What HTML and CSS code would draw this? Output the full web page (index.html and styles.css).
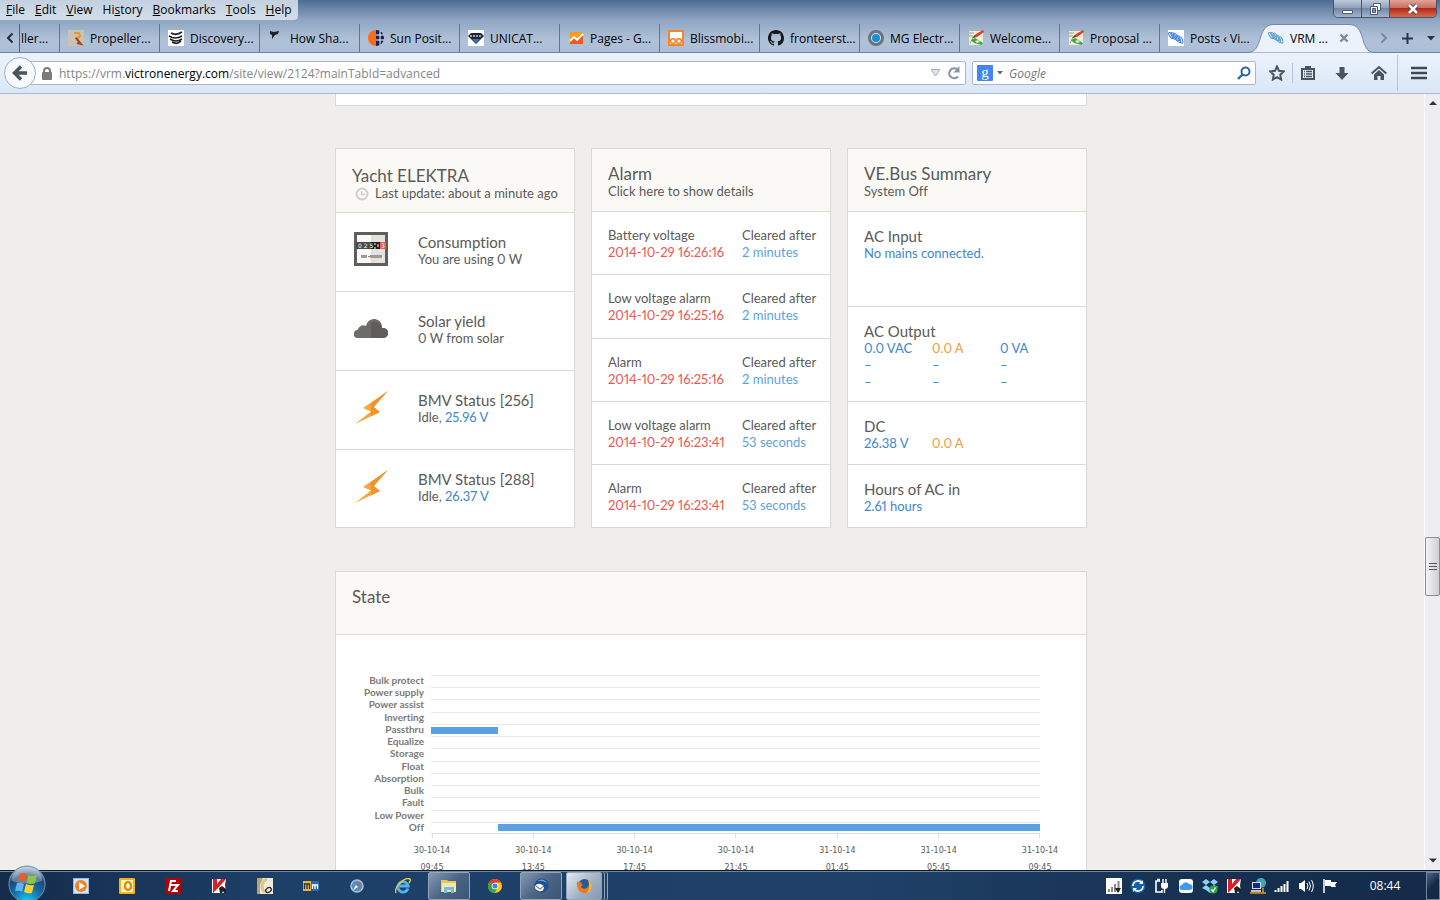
FILE: index.html
```html
<!DOCTYPE html>
<html lang="en">
<head>
    <meta charset="UTF-8">
    <meta name="viewport" content="width=device-width, initial-scale=1.0">
    <title>VRM Portal</title>
    <link rel="stylesheet" href="styles.css">
</head>
<body>

    <!-- Shared icons -->
    <svg class="defs" aria-hidden="true">
        <symbol id="bolt" viewBox="0 0 34 34">
            <path d="M34 1 9 18l8 3.500L1 34l25-12-8-4z" fill="#f7a63c"/>
            <path d="M34 1 17 13v13.300L26 22l-6-5z" fill="#f0932b"/>
        </symbol>
        <symbol id="wave" viewBox="0 0 16 16">
            <g fill="none" stroke="currentColor">
                <ellipse cx="3" cy="5.500" rx="1.500" ry="3.500" transform="rotate(-35 3 5.500)"/>
                <ellipse cx="5.500" cy="6" rx="1.500" ry="4" transform="rotate(-35 5.500 6)"/>
                <ellipse cx="8" cy="7" rx="1.500" ry="4.500" transform="rotate(-30 8 7)"/>
                <ellipse cx="10.500" cy="9" rx="1.500" ry="4" transform="rotate(-25 10.500 9)"/>
                <ellipse cx="13" cy="10" rx="1.500" ry="3.500" transform="rotate(-20 13 10)"/>
            </g>
        </symbol>
        <symbol id="pencils" viewBox="0 0 16 16">
            <path d="M1 1h14v14H1z" fill="#f1ecd6"/>
            <path d="M1 3h5M1 6h4M2 13l3-5" stroke="#9aa77a"/>
            <path d="M15 0 8 4 4 8l5-1 7-5z" fill="#d2452c"/>
            <path d="m3 10 4-2 8 5-1 2-8-2z" fill="#3fa648"/>
            <path d="M7 11l3-1 2 2-3 1z" fill="#d9efd2"/>
            <path d="M4 8 7 5l1 2z" fill="#6b4a2a"/>
        </symbol>
        <symbol id="kaspersky" viewBox="0 0 16 16">
            <path d="M1 1h14l-1 6 1 8H1z" fill="#fff"/>
            <path d="M2 1h4v5l4-5h5L8 9l-6 6z" fill="#d8202a"/>
            <path d="M8 10l3-2 4 3v4h-2l-1-2-1 2H9z" fill="#222"/>
        </symbol>
    </svg>

    <!-- Window title bar -->
    <header class="titlebar">
        <nav class="menu">
            <button><u>F</u>ile</button>
            <button><u>E</u>dit</button>
            <button><u>V</u>iew</button>
            <button>Hi<u>s</u>tory</button>
            <button><u>B</u>ookmarks</button>
            <button><u>T</u>ools</button>
            <button><u>H</u>elp</button>
        </nav>
        <div class="window-buttons">
            <button aria-label="Minimize"><svg width="13" height="14"><path d="M1.500 8.500h10v3h-10z" fill="#fff" stroke="#4d5b70"/></svg></button>
            <button aria-label="Restore"><svg width="13" height="14"><path d="M4.500 1.500h7v7h-7z" fill="#fff" stroke="#4d5b70"/><path d="M1.500 4.500h7v8h-7z" fill="#fff" stroke="#4d5b70"/><path d="M3.500 6.500h3v4h-3z" fill="#8393a9" stroke="#4d5b70"/></svg></button>
            <button class="close" aria-label="Close"><svg width="14" height="14"><path d="m3 3 8 8m0-8-8 8" stroke="#5b3f4a" stroke-width="4.500"/><path d="m3 3 8 8m0-8-8 8" stroke="#fff" stroke-width="2.500"/></svg></button>
        </div>
    </header>

    <!-- Tabs -->
    <div class="tabs">
        <button class="scroll-left" aria-label="Scroll tabs left"><svg width="8" height="12"><path d="M6.500 1.500 2 6l4.500 4.500" fill="none" stroke="#222b36" stroke-width="2"/></svg></button>
        <button class="tab tab-cut">ller...</button>
        <button class="tab">
            <svg viewBox="0 0 16 16"><path d="M0 0h16v16H0z" fill="#c9c2b6"/><path d="M6 3h5l1 3-2 2H7" fill="none" stroke="#e9962a" stroke-width="2"/><path d="m8 8 5 6-4-1" fill="none" stroke="#a8481a" stroke-width="2"/></svg>
            Propeller...
        </button>
        <button class="tab">
            <svg viewBox="0 0 16 16"><path d="M0 0h16v16H0z" fill="#fff"/><path d="M3 3q5 3 11-1M1 6q6 4 13 0M2 9q6 4 12 0M4 12q5 3 9-1" fill="none" stroke="#1d1f22" stroke-width="1.700"/></svg>
            Discovery...
        </button>
        <button class="tab">
            <svg viewBox="0 0 16 16"><path d="m2 1 4 1 5-1-1 3-3 1-3 4 0-4-2-1z" fill="#222"/></svg>
            How Sha...
        </button>
        <button class="tab">
            <svg viewBox="0 0 16 16"><path d="M8 0a8 8 0 0 0 0 16z" fill="#ff6a13"/><path d="M8 0a8 8 0 0 1 0 16z" fill="#14235a"/><path d="M8 5h8M8 10h8M12 1v14" stroke="#fff"/></svg>
            Sun Posit...
        </button>
        <button class="tab">
            <svg viewBox="0 0 16 16"><path d="M0 0h16v16H0z" fill="#fff"/><path d="M3 3h10l3 3-8 8-8-8z" fill="#23272c"/><path d="M4 9h8l-4 4z" fill="#2b7cc0"/><path d="M2 6h12" stroke="#ccd" stroke-width="1.500" stroke-dasharray="2 1"/></svg>
            UNICAT...
        </button>
        <button class="tab">
            <svg viewBox="0 0 16 16"><rect x="2" y="2" width="13" height="12" rx="1" fill="#f99b1c"/><path d="m2 11 4-4 3 3 6-6v10H2z" fill="#f05a22"/><path d="m2 11 4-4 3 3 6-6" fill="none" stroke="#fff" stroke-width="1.800"/></svg>
            Pages - G...
        </button>
        <button class="tab">
            <svg viewBox="0 0 16 16"><path d="M0 0h16v16H0z" fill="#f5842a"/><path d="M2 2h12v6H2z" fill="#fff"/><path d="M2 8h12v6H2z" fill="#fbe3cf"/><circle cx="5" cy="11" r="2.300" fill="#fff" stroke="#f5842a" stroke-width="1.500"/><circle cx="11" cy="11" r="2.300" fill="#fff" stroke="#f5842a" stroke-width="1.500"/></svg>
            Blissmobi...
        </button>
        <button class="tab">
            <svg viewBox="0 0 16 16"><path fill="#191717" d="M8 0C3.580 0 0 3.580 0 8c0 3.540 2.290 6.530 5.470 7.590.4.070.55-.17.55-.38v-1.490c-2.010.37-2.530-.49-2.690-.94-.09-.23-.48-.94-.82-1.130-.28-.15-.68-.52-.01-.53.63-.01 1.080.58 1.230.82.72 1.210 1.870.87 2.330.66.070-.52.28-.87.51-1.070-1.780-.2-3.640-.89-3.640-3.950 0-.87.31-1.590.82-2.150-.08-.2-.36-1.020.08-2.120 0 0 .67-.21 2.200.82a7.700 7.700 0 0 1 4 0c1.530-1.040 2.200-.82 2.200-.82.44 1.100.16 1.920.08 2.120.51.56.82 1.270.82 2.150 0 3.070-1.870 3.750-3.650 3.950.29.25.54.73.54 1.480v2.200c0 .21.15.46.55.38A8 8 0 0 0 16 8c0-4.420-3.580-8-8-8z"/></svg>
            fronteerst...
        </button>
        <button class="tab">
            <svg viewBox="0 0 16 16"><circle cx="8" cy="8" r="6.500" fill="#cfe4f2" stroke="#6d737b" stroke-width="3"/><circle cx="8" cy="8" r="4" fill="#1b8fd2"/></svg>
            MG Electr...
        </button>
        <button class="tab"><svg><use href="#pencils"/></svg>Welcome...</button>
        <button class="tab"><svg><use href="#pencils"/></svg>Proposal ...</button>
        <button class="tab tab-last"><svg class="wave-blue"><use href="#wave"/></svg>Posts ‹ Vi...</button>
        <button class="tab tab-active">
            <svg class="tab-shape" viewBox="0 0 126 29"><path d="M0 28.500C16 28 8 .5 26 .5h75C119 .5 111 28 126 28.500" fill="#ebf2fb" stroke="#7388a5"/></svg>
            <svg class="wave-light"><use href="#wave"/></svg>
            <span>VRM ...</span>
            <svg class="tab-close" viewBox="0 0 10 10"><path d="m1.500 1.500 7 7m0-7-7 7" stroke="#818993" stroke-width="2.400"/></svg>
        </button>
        <div class="tab-tools">
            <button aria-label="Scroll tabs right"><svg width="8" height="12"><path d="M1.500 1.500 6 6l-4.500 4.500" fill="none" stroke="#7c8899" stroke-width="2"/></svg></button>
            <button aria-label="New tab"><svg width="11" height="11"><path d="M5.500 0v11M0 5.500h11" stroke="#2b3644" stroke-width="2"/></svg></button>
            <button aria-label="List all tabs"><svg width="8" height="5"><path d="M0 0h8L4 4.500z" fill="#2b3644"/></svg></button>
        </div>
    </div>

    <!-- Navigation bar -->
    <div class="navbar">
        <button class="back" aria-label="Back"><svg width="16" height="16"><path d="M9 1.500 2.500 8 9 14.500M3 8h12" fill="none" stroke="#4a545f" stroke-width="3.400"/></svg></button>
        <div class="urlbar">
            <svg width="12" height="13"><path d="M3 6V4a3 3 0 0 1 6 0v2" fill="none" stroke="#7b7b7b" stroke-width="2"/><rect x="1" y="5" width="10" height="8" rx="1" fill="#7b7b7b"/></svg>
            <a href="#state">https://vrm.<b>victronenergy.com</b>/site/view/2124?mainTabId=advanced</a>
            <svg width="11" height="8"><path d="M1 .5h9L5.500 7z" fill="#dfe3ea" stroke="#a6aebb"/></svg>
            <button aria-label="Reload"><svg width="14" height="14"><path d="M11 10.500A5 5 0 1 1 10.500 3.500" fill="none" stroke="#8593a5" stroke-width="2"/><path d="M12.500 0v6.500H6.500z" fill="#8593a5"/></svg></button>
        </div>
        <form class="searchbar">
            <svg width="16" height="16"><rect width="16" height="16" rx="1" fill="#4285f4"/><text class="google-g" x="8" y="12" text-anchor="middle">g</text></svg>
            <svg class="engine-arrow" width="6" height="4"><path d="M0 0h6L3 3.500z" fill="#666"/></svg>
            <input type="search" placeholder="Google" aria-label="Search with Google">
            <button aria-label="Search"><svg width="14" height="14"><circle cx="8.500" cy="5.500" r="4" fill="none" stroke="#2d66a4" stroke-width="2"/><path d="M5.500 8.500 1 13" stroke="#2d66a4" stroke-width="2.400"/></svg></button>
        </form>
        <div class="toolbar">
            <button aria-label="Bookmark this page"><svg width="16" height="16"><path d="m8 1.500 2 4.300 4.700.6-3.400 3.300.8 4.800L8 12.200l-4.100 2.300.8-4.800L1.300 6.400 6 5.800z" fill="none" stroke="#4a545f" stroke-width="2"/></svg></button>
            <button class="clip" aria-label="Bookmarks"><svg width="14" height="16"><path d="M1 4h12v10H1z" fill="none" stroke="#4a545f" stroke-width="2"/><path d="M4 1h6v3H4z" fill="#4a545f"/><path d="M3 6.500h1m1 0h6m-8 2.500h1m1 0h6m-8 2.500h1m1 0h6" stroke="#4a545f" stroke-width="1.300"/></svg></button>
            <button class="wide" aria-label="Downloads"><svg width="14" height="15"><path d="M4.500 1h5v6h4L7 14 .5 7h4z" fill="#4a545f"/></svg></button>
            <button class="wide" aria-label="Home"><svg width="16" height="16"><path d="M.7 8.500 8 2l7.300 6.500" fill="none" stroke="#4a545f" stroke-width="2"/><path d="M3 9.500 8 5l5 4.500V15H9.500v-4h-3v4H3z" fill="#4a545f"/></svg></button>
            <button class="burger" aria-label="Open menu"><svg width="16" height="14"><path d="M0 2h16M0 7h16M0 12h16" stroke="#3f4953" stroke-width="2.600"/></svg></button>
        </div>
    </div>

    <!-- Page -->
    <div class="viewport">
        <main class="page">
            <section class="card stub"></section>

            <div class="columns">
                <section class="card">
                    <header class="card-head head-site">
                        <h2>Yacht ELEKTRA</h2>
                        <p><svg width="14" height="14"><circle cx="7" cy="7" r="5.500" fill="none" stroke="#cfcecb" stroke-width="2"/><path d="M6.500 4v3.500H10" fill="none" stroke="#cfcecb" stroke-width="1.500"/></svg>Last update: about a minute ago</p>
                    </header>
                    <div class="status">
                        <svg viewBox="0 0 34 34">
                            <path d="M0 0h34v34H0z" fill="#5f5e5a"/><path d="M3 3h28v28H3z" fill="#fbfaf6"/><path d="M17 3h14v28H17z" fill="#e4e2dc"/>
                            <path d="M2 10h15v7H2z" fill="#4b4a47"/><path d="M17 10h9v7h-9z" fill="#222"/><path d="M26 10h6v7h-6z" fill="#ee5a55"/>
                            <text class="meter-digits" x="4" y="16">0 2 5</text><path d="M21 11v2m0 2v2m3-5v3" stroke="#fff"/><text class="meter-digits" x="27" y="16">3</text>
                            <path d="M7 23h6v3H7zM16 23h12v3H16z" fill="#9b9a96"/><path d="M14 24h2v1h-2z" fill="#ee5a55"/>
                        </svg>
                        <div><h3>Consumption</h3><p>You are using 0 W</p></div>
                    </div>
                    <div class="status">
                        <svg viewBox="0 0 34 34">
                            <path d="M4 27a4 4 0 0 1-.5-8 6 6 0 0 1 8.500-4A8 8 0 0 1 28 17a5 5 0 0 1 2 10z" fill="#6e6d69"/>
                            <path d="M17 11.500a8 8 0 0 1 11 5.500 5 5 0 0 1 2 10H17z" fill="#5f5e5a"/>
                        </svg>
                        <div><h3>Solar yield</h3><p>0 W from solar</p></div>
                    </div>
                    <div class="status">
                        <svg><use href="#bolt"/></svg>
                        <div><h3>BMV Status [256]</h3><p>Idle, <span class="blue">25.96 V</span></p></div>
                    </div>
                    <div class="status">
                        <svg><use href="#bolt"/></svg>
                        <div><h3>BMV Status [288]</h3><p>Idle, <span class="blue">26.37 V</span></p></div>
                    </div>
                </section>

                <section class="card">
                    <header class="card-head">
                        <h2>Alarm</h2>
                        <p>Click here to show details</p>
                    </header>
                    <table class="alarms">
                        <tr><td>Battery voltage<br><span class="red">2014-10-29 16:26:16</span></td><td>Cleared after<br><span class="sky">2 minutes</span></td></tr>
                        <tr><td>Low voltage alarm<br><span class="red">2014-10-29 16:25:16</span></td><td>Cleared after<br><span class="sky">2 minutes</span></td></tr>
                        <tr><td>Alarm<br><span class="red">2014-10-29 16:25:16</span></td><td>Cleared after<br><span class="sky">2 minutes</span></td></tr>
                        <tr><td>Low voltage alarm<br><span class="red">2014-10-29 16:23:41</span></td><td>Cleared after<br><span class="sky">53 seconds</span></td></tr>
                        <tr><td>Alarm<br><span class="red">2014-10-29 16:23:41</span></td><td>Cleared after<br><span class="sky">53 seconds</span></td></tr>
                    </table>
                </section>

                <section class="card">
                    <header class="card-head">
                        <h2>VE.Bus Summary</h2>
                        <p>System Off</p>
                    </header>
                    <div class="reading tall">
                        <h3>AC Input</h3>
                        <p class="blue">No mains connected.</p>
                    </div>
                    <div class="reading tall">
                        <h3>AC Output</h3>
                        <table>
                            <tr><td>0.0 VAC</td><td class="orange">0.0 A</td><td>0 VA</td></tr>
                            <tr><td>–</td><td>–</td><td>–</td></tr>
                            <tr><td>–</td><td>–</td><td>–</td></tr>
                        </table>
                    </div>
                    <div class="reading">
                        <h3>DC</h3>
                        <table>
                            <tr><td>26.38 V</td><td class="orange">0.0 A</td><td></td></tr>
                        </table>
                    </div>
                    <div class="reading">
                        <h3>Hours of AC in</h3>
                        <p class="blue">2.61 hours</p>
                    </div>
                </section>
            </div>

            <!-- State chart -->
            <section class="card" id="state">
                <header class="card-head"><h2>State</h2></header>
                <div class="chart">
                    <div class="chart-row"><span>Bulk protect</span><div></div></div>
                    <div class="chart-row"><span>Power supply</span><div></div></div>
                    <div class="chart-row"><span>Power assist</span><div></div></div>
                    <div class="chart-row"><span>Inverting</span><div></div></div>
                    <div class="chart-row"><span>Passthru</span><div><i style="width: 11%"></i></div></div>
                    <div class="chart-row"><span>Equalize</span><div></div></div>
                    <div class="chart-row"><span>Storage</span><div></div></div>
                    <div class="chart-row"><span>Float</span><div></div></div>
                    <div class="chart-row"><span>Absorption</span><div></div></div>
                    <div class="chart-row"><span>Bulk</span><div></div></div>
                    <div class="chart-row"><span>Fault</span><div></div></div>
                    <div class="chart-row"><span>Low Power</span><div></div></div>
                    <div class="chart-row"><span>Off</span><div><i style="width: 89%; margin-left: 11%"></i></div></div>
                </div>
                <div class="axis">
                    <span>30-10-14<br>09:45</span>
                    <span>30-10-14<br>13:45</span>
                    <span>30-10-14<br>17:45</span>
                    <span>30-10-14<br>21:45</span>
                    <span>31-10-14<br>01:45</span>
                    <span>31-10-14<br>05:45</span>
                    <span>31-10-14<br>09:45</span>
                </div>
            </section>
        </main>
        <div class="scrollbar">
            <svg width="8" height="5"><path d="M4 0 8 4H0z" fill="#333"/></svg>
            <div class="thumb"><svg width="8" height="9"><path d="M0 1.500h8M0 4.500h8M0 7.500h8" stroke="#555"/></svg></div>
            <svg width="8" height="5"><path d="M4 4.500 8 .5H0z" fill="#333"/></svg>
        </div>
    </div>

    <!-- Taskbar -->
    <footer class="taskbar">
        <button class="start" aria-label="Start">
            <svg viewBox="0 0 38 38">
                <defs>
                    <radialGradient id="orb" cx=".5" cy="1" r=".95"><stop offset="0" stop-color="#12d4ff"/><stop offset=".4" stop-color="#1476b0"/><stop offset=".75" stop-color="#1d4778"/><stop offset="1" stop-color="#a4bdd0"/></radialGradient>
                </defs>
                <circle cx="19" cy="19" r="18" fill="url(#orb)" stroke="#7895ad"/>
                <path d="M4 16a15 14 0 0 1 30 0q-15 5-30 0z" fill="#fff" opacity=".3"/>
                <path d="M12 9q4-2 7 0l-2 8q-3-2-7-1z" fill="#ee5a24"/>
                <path d="M20 10q4 2 9 0l-2 8q-4 2-8 0z" fill="#8cc63e"/>
                <path d="M9 18q4-1 7 1l-2 8q-3-2-7-1z" fill="#5ab4f0"/>
                <path d="M18 19q4 2 8 1l-2 8q-4 1-8-1z" fill="#fcd02f"/>
            </svg>
        </button>
        <div class="tasks">
            <button aria-label="Media Player"><svg viewBox="0 0 16 16"><path d="M0 0h16v16H0z" fill="#8dc1e8"/><path d="M1 1h14v14H1z" fill="#cfe6f7"/><circle cx="8" cy="8" r="6" fill="#f58220"/><path d="m6 4 6 4-6 4z" fill="#fff"/></svg></button>
            <button aria-label="Outlook"><svg viewBox="0 0 16 16"><rect width="16" height="16" rx="1" fill="#f5b21b"/><path d="M2 2h12v12H2z" fill="#fff2c4"/><ellipse cx="9" cy="8" rx="3" ry="4" fill="#fff" stroke="#db9204" stroke-width="2.500"/></svg></button>
            <button aria-label="FileZilla"><svg viewBox="0 0 16 16"><path d="M0 0h16v16H0z" fill="#b30000"/><path d="M4 13 6 3h5M5 7h4M8 7h5l-5 6h5" fill="none" stroke="#fff" stroke-width="2"/></svg></button>
            <button aria-label="Kaspersky"><svg><use href="#kaspersky"/></svg></button>
            <button aria-label="Editor"><svg viewBox="0 0 16 16"><path d="M0 0h16v16H0z" fill="#efe9d8"/><path d="M0 0h6L3 7v9H0z" fill="#b5a575"/><path d="M10 1Q5 4 5 8t3 6" fill="none" stroke="#d9c68c" stroke-width="3"/><ellipse cx="11.500" cy="12" rx="3" ry="2.200" transform="rotate(-35 11.500 12)" fill="none" stroke="#222" stroke-width="1.300"/></svg></button>
            <button aria-label="Media Monkey"><svg viewBox="0 0 16 16"><rect y="3" width="16" height="10" rx="1" fill="#2b6ba5"/><path d="M0 3h8v10H0z" fill="#e8b43a"/><path d="M1.500 11V6h5v5M4 6v5" fill="none" stroke="#2b3540" stroke-width="1.300"/><path d="M9.500 11V7h5v4M12 7v4" fill="none" stroke="#fff" stroke-width="1.300"/></svg></button>
            <button aria-label="Safari"><svg viewBox="0 0 16 16"><circle cx="8" cy="8" r="6" fill="#4a8fd0" stroke="#b8bec5" stroke-width="1.500"/><path d="m12 4-3 5-2-2z" fill="#e34b3c"/><path d="m4 12 3-5 2 2z" fill="#fff"/></svg></button>
            <button aria-label="Internet Explorer"><svg viewBox="0 0 16 16"><path d="M13 10.500A5.200 5.200 0 1 1 13.200 8H4.500" fill="none" stroke="#4db5ee" stroke-width="2.800"/><path d="M1 15Q-1 11 5 5t10-4q1 1-1 4" fill="none" stroke="#f3c63a" stroke-width="1.400"/></svg></button>
            <button class="open" aria-label="Explorer"><svg viewBox="0 0 16 16"><path d="M0 2h6l1 1h8v11H0z" fill="#e6c860"/><path d="M1 5h14v9H1z" fill="#f8e7a0"/><path d="M3 15V9h10v6h-3v-3H6v3z" fill="#74bde8"/></svg></button>
            <button aria-label="Chrome"><svg viewBox="0 0 16 16"><circle cx="8" cy="8" r="7" fill="#f7c920"/><path d="M8 8 1.900 4.500A7 7 0 0 1 14 4.500H8z" fill="#e33b2e"/><path d="M8 8 1.900 4.500A7 7 0 0 0 7.500 15L11 9z" fill="#35a24b"/><circle cx="8" cy="8" r="3.300" fill="#fff"/><circle cx="8" cy="8" r="2.500" fill="#3f83ea"/></svg></button>
            <button class="open" aria-label="Thunderbird"><svg viewBox="0 0 16 16"><circle cx="8.500" cy="7.500" r="7" fill="#1d4f92"/><path d="M4 3q6-4 10 2-5-3-10-2z" fill="#64a9e2"/><ellipse cx="6.500" cy="9.500" rx="4.500" ry="3.500" transform="rotate(15 6.500 9.500)" fill="#f0f1f2"/><path d="m3 8 4 3 4-3" fill="none" stroke="#59606a"/></svg></button>
            <button class="open current" aria-label="Firefox"><svg viewBox="0 0 16 16"><circle cx="8.500" cy="7.500" r="6.500" fill="#275b9f"/><path d="M1 3q1 2 4 1 0 2 2 3-3 1-1 3 3 2 6-1 2-3 0-7 5 4 3 9-3 5-8 4-7-2-6-12z" fill="#ee7a1a"/><path d="M12 2q5 4 3 9-2 3-4 4 4-6 1-13z" fill="#fbc22d"/></svg></button>
        </div>
        <div class="tray">
            <svg viewBox="0 0 16 16"><path d="M0 0h16v16H0z" fill="#fff"/><path d="M3 14v-3M6 14V9M9 14V6M12.500 14V3" stroke="#888" stroke-width="2"/><path d="M9 10h6l-3 5z" fill="#222"/></svg>
            <svg viewBox="0 0 16 16"><circle cx="8" cy="8" r="7.500" fill="#1560a8"/><path d="M3 8a5 5 0 0 1 9-3M13 8a5 5 0 0 1-9 3" fill="none" stroke="#fff" stroke-width="1.600"/><path d="M13 2v4H9zM3 14v-4h4z" fill="#fff"/></svg>
            <svg viewBox="0 0 16 16"><path d="M6 3H2v11h6v-2M3 1.500h3" fill="none" stroke="#fff" stroke-width="1.600"/><path d="M7 5h7v3q0 3-3.500 3T7 8z" fill="#fff"/><path d="M9 1v4m3-4v4m-1.500 5v5" stroke="#fff" stroke-width="1.400"/></svg>
            <svg viewBox="0 0 16 16"><rect x="1" y="1" width="14" height="14" rx="3" fill="#fff"/><path d="M4 12a2.500 2.500 0 0 1 0-5 4 4 0 0 1 7-1 3 3 0 0 1 1 6z" fill="#3b9cf2"/></svg>
            <svg viewBox="0 0 16 16"><path d="m4 1 4 3-4 3-4-3zM12 1l4 3-4 3-4-3zM4 7l4 3-4 2-4-2zM12 7l4 2-4 3-4-2zM4 12l4-2 4 2-4 3z" fill="#8fd0f5"/><circle cx="11.500" cy="11.500" r="4" fill="#2ba640"/><path d="m9.500 11.500 1.500 2 2.500-4" fill="none" stroke="#fff" stroke-width="1.300"/></svg>
            <svg><use href="#kaspersky"/></svg>
            <svg viewBox="0 0 16 16"><circle cx="11" cy="5" r="5" fill="#3fa9b8"/><path d="M2 4h9v7H2z" fill="#dcdcdc"/><path d="M3 5h7v5H3z" fill="#1724a0"/><path d="M1 12h10v2H1z" fill="#c4c4c4"/><path d="M0 15h16M13 10v5" stroke="#e09a1d" stroke-width="1.500"/></svg>
            <svg viewBox="0 0 16 16"><path d="M1.500 14v-2M4.500 14v-4M7.500 14V8M10.500 14V6M13.500 14V3" stroke="#fff" stroke-width="2"/></svg>
            <svg viewBox="0 0 16 16"><path d="M1 5h2l4-3v12l-4-3H1z" fill="#fff"/><path d="M9 5q2 3 0 6M11 3.500q3 4.500 0 9M13.500 2q3.500 6 0 12" fill="none" stroke="#fff"/></svg>
            <svg viewBox="0 0 16 16"><path d="M2 1v14" stroke="#fff" stroke-width="1.500"/><path d="M3 2h6v2h6l-2 3 1 2H9V8H3z" fill="#fff"/></svg>
        </div>
        <time class="clock">08:44</time>
        <button class="show-desktop" aria-label="Show desktop"></button>
    </footer>

</body>
</html>
```
FILE: styles.css
```css
* {
    box-sizing: border-box;
}

body {
    margin: 0;
    height: 100vh;
    display: flex;
    flex-direction: column;
    overflow: hidden;
    font-family: "Open Sans", sans-serif;
    font-size: 12px;
    color: #000;
    background: linear-gradient(#4d6c92, #8fa5c2 20px, #b0c2d8 40px, #aabed6 53px) no-repeat #efeeea;
    background-size: 100% 53px;
}

button {
    border: 0;
    padding: 0;
    margin: 0;
    background: none;
    font: inherit;
    color: inherit;
}

svg {
    display: block;
    flex: none;
}

.defs {
    position: absolute;
    width: 0;
    height: 0;
}

h2, h3, p {
    margin: 0;
    font-weight: 400;
}

/* Title bar */
.titlebar {
    display: flex;
    justify-content: space-between;
    align-items: flex-start;
    height: 24px;
    flex: none;
}

.menu {
    display: flex;
    gap: 10px;
    height: 20px;
    padding: 0 6px;
    background: rgba(235, 241, 248, 0.75);
    border-radius: 0 0 4px 0;
    line-height: 20px;
}

.window-buttons {
    display: flex;
    margin-right: 3px;
    border: 1px solid #46566e;
    border-top: 0;
    border-radius: 0 0 5px 5px;
    overflow: hidden;
}

.window-buttons button {
    display: flex;
    align-items: center;
    justify-content: center;
    width: 28px;
    height: 17px;
    background: linear-gradient(#c0cbdb, #8c9db7 50%, #7388a6 50%, #a3b4cb);
    border-right: 1px solid #46566e;
}

.window-buttons .close {
    width: 46px;
    border-right: 0;
    background: linear-gradient(#e0a497, #c8685a 50%, #b02c18 50%, #d86a4c);
}

/* Tabs */
.tabs {
    display: flex;
    height: 29px;
    flex: none;
    border-bottom: 1px solid #6f83a0;
    line-height: 29px;
    white-space: nowrap;
}

.scroll-left {
    display: flex;
    align-items: center;
    justify-content: center;
    width: 20px;
    border-right: 1px solid #4f6077;
}

.tab {
    display: flex;
    align-items: center;
    gap: 6px;
    flex: 0 0 100px;
    padding-left: 8px;
    border-right: 1px solid #62758e;
}

.tab svg {
    width: 16px;
    height: 16px;
}

.tab-cut {
    flex-basis: 40px;
    padding-left: 1px;
}

.tab-last {
    flex-basis: 98px;
    border-right: 0;
}

.wave-blue {
    color: #3c7fe0;
    background: #fff;
}

.wave-light {
    color: #5b9fd2;
}

.tab-active {
    position: relative;
    flex-basis: 110px;
    padding-left: 10px;
    border-right: 0;
}

.tab .tab-shape {
    position: absolute;
    left: -10px;
    top: 0;
    width: 126px;
    height: 29px;
}

.tab-active > :not(.tab-shape) {
    position: relative;
}

.tab .tab-close {
    width: 10px;
    height: 10px;
    margin-left: 5px;
}

.tab-tools {
    display: flex;
    flex: 1;
    align-items: center;
    justify-content: flex-end;
    gap: 14px;
    padding-right: 5px;
}

/* Navigation bar */
.navbar {
    display: flex;
    align-items: center;
    height: 41px;
    flex: none;
    padding-left: 4px;
    background: linear-gradient(#ebf2fb, #dae7f6);
    border-bottom: 1px solid #a8bbd3;
}

.back {
    z-index: 1;
    display: flex;
    align-items: center;
    justify-content: center;
    width: 32px;
    height: 32px;
    border: 1px solid #9fb0c5;
    border-radius: 50%;
    background: #f6f9fd;
}

.urlbar, .searchbar {
    display: flex;
    align-items: center;
    height: 24px;
    background: #fff;
    border: 1px solid #a9b9cd;
    border-radius: 2px;
}

.urlbar {
    flex: 1;
    gap: 6px;
    margin-left: -16px;
    padding: 0 4px 0 20px;
}

.urlbar a {
    flex: 1;
    color: #858585;
    text-decoration: none;
}

.urlbar b {
    font-weight: 400;
    color: #000;
}

.searchbar {
    width: 284px;
    margin-left: 6px;
    padding: 0 4px;
}

.google-g {
    font: 15px "Liberation Serif", serif;
    fill: #fff;
}

.engine-arrow {
    margin: 0 6px 0 4px;
}

.searchbar input {
    flex: 1;
    min-width: 0;
    border: 0;
    padding: 0;
    background: none;
    font: italic 12px "Open Sans", sans-serif;
}

.searchbar input::placeholder {
    color: #757575;
}

.toolbar {
    display: flex;
    align-items: center;
    width: 184px;
    padding-left: 5px;
}

.toolbar button {
    display: flex;
    align-items: center;
    justify-content: center;
    flex: 0 0 31px;
    height: 20px;
}

.toolbar .clip {
    border-left: 1px solid #b5c4d8;
}

.toolbar .wide {
    flex-basis: 37px;
}

.toolbar .burger {
    flex: 1;
    height: 36px;
    border-left: 1px solid #b5c4d8;
}

/* Page */
.viewport {
    display: flex;
    flex: 1;
    min-height: 0;
    background: #efeeea;
}

.page {
    flex: 1;
    overflow: hidden;
    padding-right: 2px;
    font-family: Lato, sans-serif;
    font-size: 13px;
    line-height: 17px;
    font-variant-numeric: proportional-nums;
    font-variant-ligatures: none;
    color: #5b5a57;
}

.card {
    max-width: 752px;
    margin: 0 auto;
    background: #fff;
    border: 1px solid #dad9d6;
}

.stub {
    height: 12px;
    border-top: 0;
}

.columns {
    display: grid;
    grid-template-columns: repeat(3, 1fr);
    gap: 16px;
    max-width: 752px;
    margin: 42px auto 43px;
}

.columns .card {
    width: 100%;
}

.card-head {
    height: 62px;
    padding: 15px 16px 0;
    background: #faf9f6;
}

.card-head h2 {
    font-size: 17px;
    line-height: 19px;
}

.head-site {
    height: 63px;
    padding-top: 17px;
}

.head-site p {
    display: flex;
    align-items: center;
    gap: 6px;
    padding-left: 3px;
}

h3 {
    font-size: 15px;
    line-height: 17px;
}

.status {
    display: flex;
    gap: 30px;
    height: 79px;
    padding: 19px 0 0 18px;
    border-top: 1px solid #dad9d6;
}

.status svg {
    width: 34px;
    height: 34px;
}

.status div {
    padding-top: 2px;
}

.status:last-child {
    height: 78px;
}

.meter-digits {
    font: 6px "DejaVu Sans", sans-serif;
    fill: #fff;
}

.blue, .reading table {
    color: #3b87d0;
}

.sky {
    color: #5ba3e0;
}

.red {
    color: #f0544f;
}

.orange {
    color: #f2993a;
}

table {
    border-collapse: collapse;
    table-layout: fixed;
    width: 100%;
}

td {
    padding: 0;
}

.alarms {
    height: 316px;
}

.alarms td {
    padding: 2px 0 0 16px;
    border-top: 1px solid #dad9d6;
}

.alarms td:first-child {
    width: 150px;
}

.alarms td + td {
    padding-left: 0;
}

.reading {
    height: 63px;
    padding: 16px 16px 0;
    border-top: 1px solid #dad9d6;
}

.reading.tall {
    height: 95px;
}

.reading td {
    width: 68px;
}

.reading table {
    width: 204px;
}

/* Chart */
.chart {
    display: flex;
    flex-direction: column;
    height: 159px;
    margin: 0 46px 0 16px;
}

#state .card-head {
    height: 63px;
    border-bottom: 1px solid #dad9d6;
    margin-bottom: 40px;
}

.chart-row {
    display: flex;
    flex: 1;
    font-size: 10px;
    font-weight: 700;
    line-height: 11px;
    color: #7b7a78;
}

.chart-row span {
    width: 72px;
    margin-right: 7px;
    text-align: right;
}

.chart-row div {
    flex: 1;
    display: flex;
    align-items: center;
    border-top: 1px solid #e8e8e8;
}

.chart-row:last-child div {
    border-bottom: 1px solid #dedede;
}

.chart-row i {
    height: 7px;
    background: #5aa2e2;
}

.axis {
    display: flex;
    justify-content: space-between;
    margin: 0 25px 0 75px;
    font: 8px/17px "DejaVu Sans", sans-serif;
    text-align: center;
}

.axis span {
    width: 42px;
}

.axis span::before {
    content: "";
    display: block;
    width: 1px;
    height: 4px;
    margin: 0 auto 4px;
    background: #dedede;
}

/* Scrollbar */
.scrollbar {
    display: flex;
    flex-direction: column;
    align-items: center;
    width: 16px;
    padding: 7px 0;
    background: #eeeef0;
    border-left: 1px solid #fafafa;
}

.thumb {
    display: flex;
    align-items: center;
    justify-content: center;
    width: 15px;
    height: 59px;
    margin: auto 0 262px;
    border: 1px solid #8e8e90;
    border-radius: 2px;
    background: linear-gradient(90deg, #f4f4f5, #cfcfd2);
}

/* Taskbar */
.taskbar {
    display: flex;
    align-items: center;
    height: 30px;
    flex: none;
    border-top: 1px solid #0c1a2c;
    box-shadow: inset 0 1px #6d86a4;
    background: linear-gradient(90deg, #152c4b, #1d4069 20%, #1f4167 60%, #162f50 85%, #142b49);
    color: #fff;
}

.start {
    position: relative;
    width: 58px;
    height: 29px;
    flex: none;
}

.start svg {
    position: absolute;
    left: 8px;
    top: -6px;
    width: 38px;
    height: 38px;
}

.tasks {
    display: flex;
}

.tasks button {
    display: flex;
    align-items: center;
    justify-content: center;
    width: 42px;
    height: 28px;
    margin: 0 2px;
}

.tasks svg, .tray svg {
    width: 16px;
    height: 16px;
}

.tasks .open {
    border: 1px solid #8fa4bd;
    border-radius: 2px;
    background: linear-gradient(135deg, #8599b2, #4c6585 50%, #3a5578);
}

.tasks .current {
    width: 36px;
    margin: 0 2px;
    background: linear-gradient(135deg, #e4eaf1, #9dafc4 60%, #8299b4);
    box-shadow: 2px 0 #23405f, 3px 0 #8fa4bd, 5px 0 #23405f, 6px 0 #8fa4bd;
}

.tray {
    display: flex;
    gap: 8px;
    margin-left: auto;
}

.clock {
    width: 88px;
    text-align: center;
    padding-left: 6px;
}

.show-desktop {
    width: 14px;
    height: 28px;
    border: 1px solid #71879f;
    background: linear-gradient(135deg, #4d6583, #132a47 50%);
}
```
